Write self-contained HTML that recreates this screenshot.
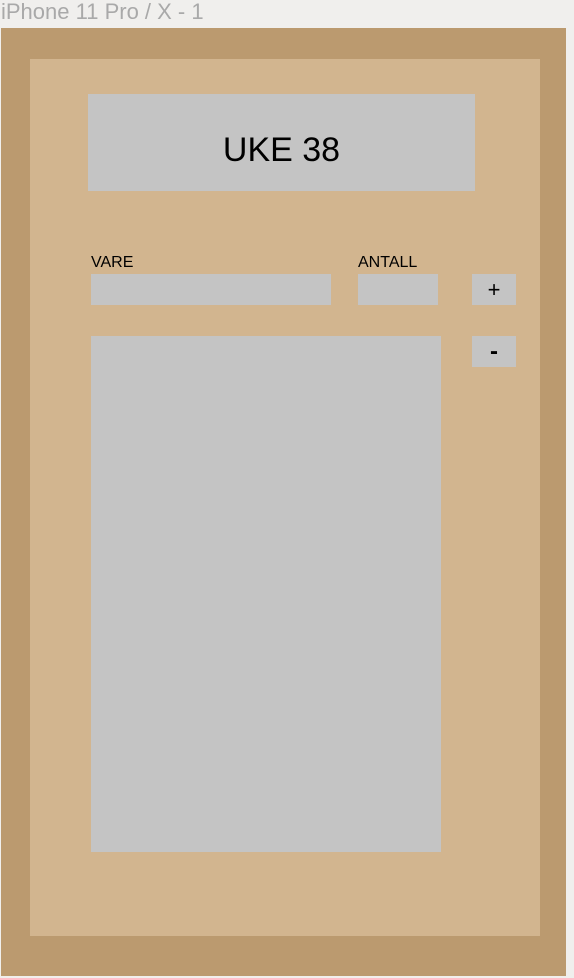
<!DOCTYPE html>
<html><head><style>
body{margin:0;width:574px;height:978px;background:#f0efed;position:relative;overflow:hidden;font-family:"Liberation Sans",sans-serif}
div{position:absolute}
.g{background:#c4c4c4}
</style></head><body>
<div style="left:1px;top:0;font-size:22px;color:#a9a9a9;line-height:24px">iPhone 11 Pro / X - 1</div>
<div style="left:1px;top:28px;width:565px;height:948px;background:#bb9a6f"></div>
<div style="left:30px;top:59px;width:510px;height:877px;background:#d2b58f"></div>
<div class="g" style="left:88px;top:94px;width:387px;height:97px"></div>
<div style="left:88px;top:130px;width:387px;text-align:center;font-size:34px;line-height:40px;color:#000">UKE 38</div>
<div style="left:91px;top:254px;font-size:16px;color:#000">VARE</div>
<div style="left:358px;top:254px;font-size:16px;color:#000">ANTALL</div>
<div class="g" style="left:91px;top:274px;width:240px;height:31px"></div>
<div class="g" style="left:358px;top:274px;width:80px;height:31px"></div>
<div class="g" style="left:472px;top:274px;width:44px;height:31px;text-align:center;line-height:31px;font-size:22px">+</div>
<div class="g" style="left:472px;top:336px;width:44px;height:31px;text-align:center;line-height:31px;font-size:24px;font-weight:bold">-</div>
<div class="g" style="left:91px;top:336px;width:350px;height:516px"></div>
</body></html>
